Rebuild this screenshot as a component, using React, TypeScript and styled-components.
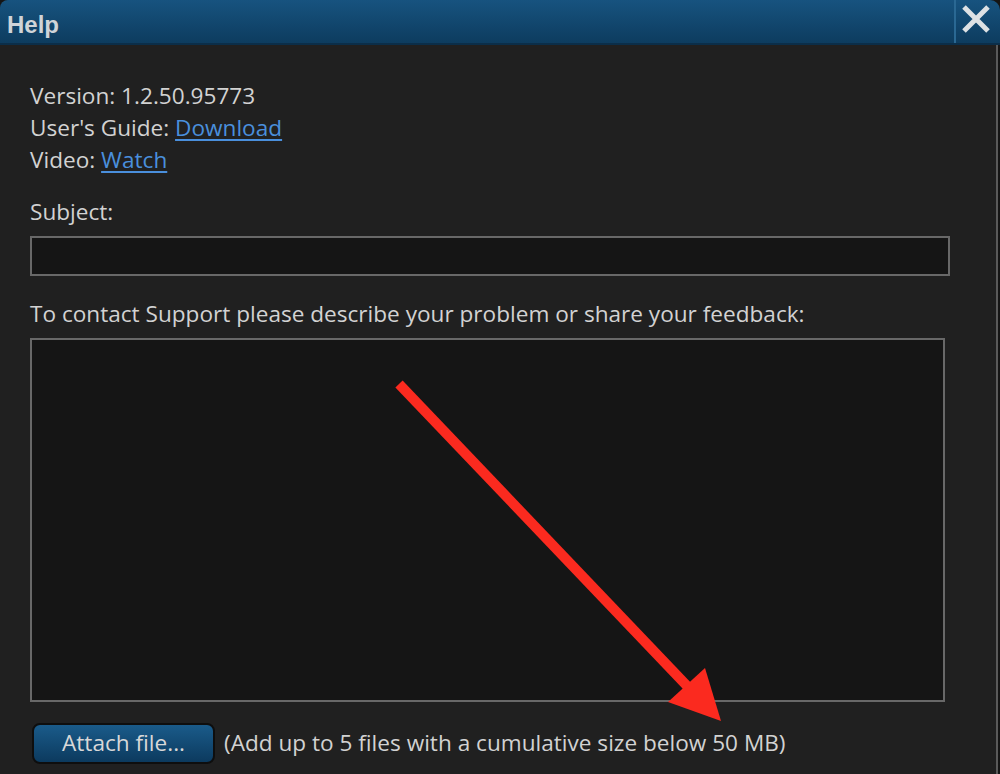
import React from "react";
import styled, { createGlobalStyle } from "styled-components";

const Global = createGlobalStyle`
  html, body { margin: 0; padding: 0; background: #151515; overflow: hidden; }
  * { box-sizing: border-box; }
`;

const Dialog = styled.div`
  width: 1000px;
  height: 774px;
  display: flex;
  flex-direction: column;
  background: #151515;
  font-family: "Open Sans", "Noto Sans", sans-serif;
`;

const TitleBar = styled.div`
  height: 45px;
  flex: none;
  display: flex;
  align-items: stretch;
  background: linear-gradient(#17537f, #0d3c5f);
  border-bottom: 2px solid #0b2e49;
  border-radius: 8px 10px 0 0;
`;

const Title = styled.div`
  flex: 1;
  display: flex;
  align-items: center;
  padding: 6px 0 0 7px;
  font-family: "Liberation Sans", Arial, sans-serif;
  font-weight: bold;
  font-size: 24px;
  color: #d0d4d8;
`;

const CloseButton = styled.div`
  width: 46px;
  flex: none;
  display: flex;
  align-items: center;
  justify-content: center;
  border-left: 2px solid #2a6893;
  padding: 0 4px 6px 0;
`;

const Body = styled.div`
  flex: 1;
  margin-right: 2px;
  background: #202020;
  border-right: 2px solid #5a5a5a;
  padding: 35px 0 0 30px;
  display: flex;
  flex-direction: column;
  color: #d2d2d2;
  font-size: 22.6px;
`;

const Line = styled.div`
  line-height: 32px;
  height: 32px;
  white-space: nowrap;
`;

const Label = styled(Line)<{ $top: number }>`
  margin-top: ${(p) => p.$top}px;
`;

const Link = styled.a`
  color: #4a8fdc;
  text-decoration: underline;
  text-underline-offset: 3px;
`;

const Input = styled.div`
  margin-top: 8px;
  width: 920px;
  height: 40px;
  background: #151515;
  border: 2px solid #686868;
`;

const AreaWrap = styled.div`
  position: relative;
  margin-top: 8px;
  width: 915px;
  height: 364px;
`;

const TextArea = styled.div`
  width: 100%;
  height: 100%;
  background: #151515;
  border: 2px solid #686868;
`;

const ArrowSvg = styled.svg`
  position: absolute;
  left: 0;
  top: 0;
  overflow: visible;
  pointer-events: none;
`;

const Footer = styled.div`
  margin-top: 21px;
  margin-left: 2px;
  display: flex;
  align-items: center;
  gap: 9px;
`;

const Button = styled.div`
  width: 183px;
  height: 41px;
  border-radius: 8px;
  border: 2px solid #0e0e0e;
  background: linear-gradient(#1a5b8a, #0c3a5e);
  color: #d8d8d8;
  display: flex;
  align-items: center;
  justify-content: center;
  font-size: 22.6px;
  padding-bottom: 2px;
`;

const Note = styled.span`
  white-space: nowrap;
  padding-bottom: 2px;
`;

export default function App() {
  return (
    <>
      <Global />
      <Dialog>
        <TitleBar>
          <Title>Help</Title>
          <CloseButton>
            <svg width="30" height="30" viewBox="0 0 30 30">
              <path d="M3 3 L27 27 M27 3 L3 27" stroke="#dde1e4" strokeWidth="5" strokeLinecap="butt" />
            </svg>
          </CloseButton>
        </TitleBar>
        <Body>
          <Line>Version: 1.2.50.95773</Line>
          <Line>
            User's Guide: <Link>Download</Link>
          </Line>
          <Line>
            Video: <Link>Watch</Link>
          </Line>
          <Label $top={20}>Subject:</Label>
          <Input />
          <Label $top={22}>To contact Support please describe your problem or share your feedback:</Label>
          <AreaWrap>
            <TextArea />
            <ArrowSvg width="915" height="364">
              <line x1="369" y1="46" x2="660" y2="351" stroke="#fb2a1f" strokeWidth="10" />
              <polygon points="691,383 638,364 675,330" fill="#fb2a1f" />
            </ArrowSvg>
          </AreaWrap>
          <Footer>
            <Button>Attach file...</Button>
            <Note>(Add up to 5 files with a cumulative size below 50 MB)</Note>
          </Footer>
        </Body>
      </Dialog>
    </>
  );
}
